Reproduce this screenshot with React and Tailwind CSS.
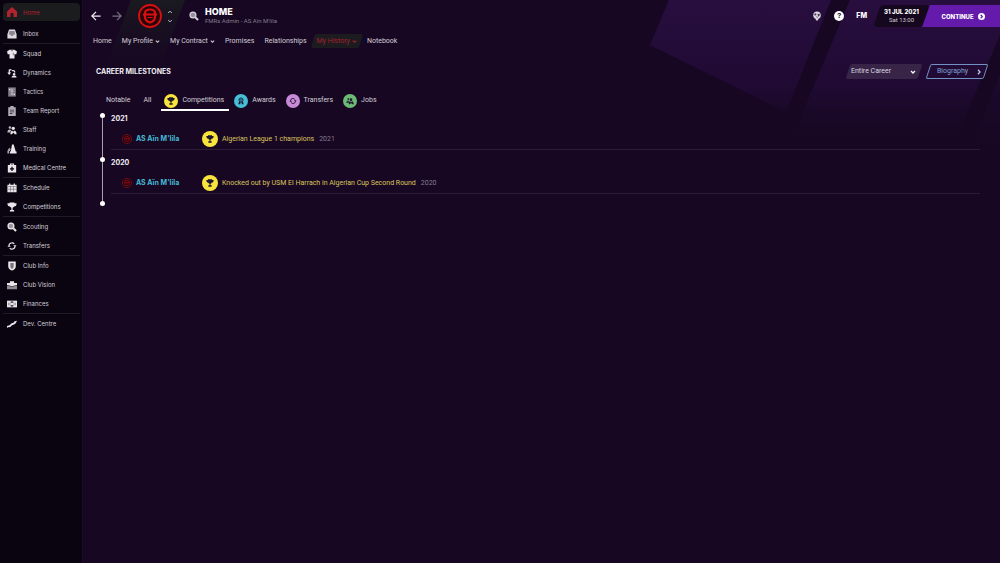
import React, { useState } from 'react';
import clsx from 'clsx';

const Icon = ({ children, className = 'w-3 h-3', box = '0 0 24 24' }) => (
    <svg viewBox={box} className={clsx('shrink-0', className)} fill="currentColor" aria-hidden="true">
        {children}
    </svg>
);

const Chevron = ({ className, d = 'M4 8l8 8 8-8' }) => (
    <svg viewBox="0 0 24 24" className={clsx('shrink-0', className)} fill="none" stroke="currentColor" strokeWidth="5" aria-hidden="true">
        <path d={d} />
    </svg>
);

// Shapes shared between the side menu, the tabs and the timeline
const trophy = <path d="M6 1h12v2h5c0 5-2 8-6 8-1 1.500-2 2.500-3.500 3v5H17v4H7v-4h3.500v-5C9 13.500 8 12.500 7 11 3 11 1 8 1 3h5z" />;
const magnifier = (
    <>
        <circle cx="9.500" cy="9.500" r="7" fillOpacity=".65" stroke="currentColor" strokeWidth="3" />
        <path d="M13.500 17l3.500-3.500 6.500 6.500-3.500 3.500z" />
    </>
);
const cycle = (
    <g fill="none" stroke="currentColor" strokeWidth="3">
        <path d="M4.500 11a7.500 7.500 0 0 1 13-4M19.500 13a7.500 7.500 0 0 1-13 4" />
        <path d="M15 10h8l-4 4.500zM1 14h8l-4-4.500z" fill="currentColor" stroke="none" />
    </g>
);
const people = (
    <>
        <circle cx="7" cy="6" r="3" fillOpacity=".8" />
        <path d="M1 18c0-5 2-7.500 6-7.500l3 2-3 5.500z" fillOpacity=".8" />
        <circle cx="15" cy="8" r="4" />
        <path d="M8 22c0-5 2-8 4-9l3 3 3-3c3 1 5 4 5 9h-4l-4-4-3 4z" />
    </>
);
const rosette = (
    <>
        <circle cx="12" cy="9" r="6" fill="none" stroke="currentColor" strokeWidth="3" />
        <circle cx="12" cy="9" r="2.500" />
        <path d="M6 14l5 2-2 7-2-2-3 1zM18 14l-5 2 2 7 2-2 3 1z" />
    </>
);

const menu = [
    [
        { name: 'Inbox', icon: <><path d="M5 1h14l4 11v11H1V12z" fillOpacity=".95" /><path d="M6 5h12l2 8h-4l-2 4h-4l-2-4H4z" fill="#8b8691" /></> },
    ],
    [
        { name: 'Squad', icon: <><path d="M6 2h12l6 4-2 7-4-1v11H6V12l-4 1-2-7z" /><path d="M9 2h6l-3 4zM14 9h2v6h-2z" fill="#6f6a76" /></> },
        { name: 'Dynamics', icon: <><path d="M5 3h6v3H7v5h3l-5 6-4-6h3V5zM12 5h3c3 0 5 2 5 6h-3c0-2-1-3-2-3h-3z" /><circle cx="17" cy="15" r="3" /><path d="M11 23c0-3 2-5 6-5s6 2 6 5z" /></> },
        { name: 'Tactics', icon: <><path d="M3 1h18v22H3z" fillOpacity=".55" /><path d="M11 4h2v4h-2zM9 9h6v2H9zM11 13h2v6h-2zM5 5h3v3H5zM16 16h3v3h-3z" /></> },
        { name: 'Team Report', icon: <><path d="M3 3h5V0h8v3h5v21H3z" fillOpacity=".75" /><path d="M7 9h10v2H7zM7 13h10v2H7zM7 17h6v2H7z" fill="#3b3544" /></> },
        { name: 'Staff', icon: people },
        { name: 'Training', icon: <><path d="M12 1h4l5 17h2v5H7v-5h2z" /><path d="M5 9l4 3-2 5H5v6H1v-6z" fillOpacity=".7" /></> },
        { name: 'Medical Centre', icon: <><path d="M7 5V1h10v4h5v18H2V5zm3 0h4V3.500h-4z" fillRule="evenodd" /><path d="M10.500 9h3v3.500H17v3h-3.500V19h-3v-3.500H7v-3h3.500z" fill="#0a0410" /></> },
    ],
    [
        { name: 'Schedule', icon: <><path d="M1 4h4V1h3v3h8V1h3v3h4v18H1z" /><path d="M2 8.500h20M2 15h20M8.500 8v13M15.500 8v13" stroke="#5a5463" strokeWidth="1.200" /></> },
        { name: 'Competitions', icon: trophy },
    ],
    [
        { name: 'Scouting', icon: magnifier },
        { name: 'Transfers', icon: cycle },
    ],
    [
        { name: 'Club Info', icon: <><path d="M3 1h18v12c0 5-4 8-9 10-5-2-9-5-9-10z" /><path d="M8 5h8v9c0 2-2 4-4 5-2-1-4-3-4-5z" fill="#77727e" /></> },
        { name: 'Club Vision', icon: <><path d="M0 7h7V3h10v4h7v5l-12 3-12-3z" /><path d="M0 13l12 3 12-3v9H0z" fillOpacity=".6" /></> },
        { name: 'Finances', icon: <><path d="M0 4h24v16H0z" /><path d="M9 6h6v12H9z" fill="#0a0410" /><circle cx="12" cy="12" r="3.500" /><path d="M3 9h3v6H3zM18 9h3v6h-3z" fill="#8a8590" /></> },
    ],
    [
        { name: 'Dev. Centre', icon: <path d="M0 17l6-2 5-5 5-1 1-3 7-2-3 6-4 3-5 2-4 4-6 1-2 2z" /> },
    ],
];

const sections = [
    { name: 'Home' },
    { name: 'My Profile', more: true },
    { name: 'My Contract', more: true },
    { name: 'Promises' },
    { name: 'Relationships' },
    { name: 'My History', more: true },
    { name: 'Notebook' },
];

const tabs = [
    { name: 'Notable' },
    { name: 'All' },
    { name: 'Competitions', icon: trophy, color: 'bg-[#f8e43c]' },
    { name: 'Awards', icon: rosette, color: 'bg-[#45bfd6]' },
    { name: 'Transfers', icon: cycle, color: 'bg-[#c88ad6]' },
    { name: 'Jobs', icon: people, color: 'bg-[#6dba74]' },
];

const milestones = [
    { year: '2021', club: 'AS Aïn M\'lila', text: 'Algerian League 1 champions' },
    { year: '2020', club: 'AS Aïn M\'lila', text: 'Knocked out by USM El Harrach in Algerian Cup Second Round' },
];

const Crest = ({ className }) => (
    <svg viewBox="0 0 24 24" className={clsx('shrink-0', className)} fill="none" stroke="#d90f12" aria-hidden="true">
        <circle cx="12" cy="12" r="11" fill="#2a0508" strokeWidth="1.800" />
        <path d="M7 8.500C7.500 6.500 9.500 5.500 12 5.500s4.500 1 5 3V13c0 3-2 4.500-5 5.500-3-1-5-2.500-5-5.500z" strokeWidth="2.200" />
        <path d="M5 10.500h14" strokeWidth="2" />
        <path d="M9.500 13.500h5" strokeWidth="1" />
    </svg>
);

const Sidebar = () => (
    <nav className="w-[83px] shrink-0 bg-[#0a0411] pl-[3px] pr-[2px] pt-[3px] font-['Inter',sans-serif] text-[6px] text-[#d3cfd7] border-r border-[#1c0c29]">
        <a href="#home" className="flex h-[18px] mb-[3px] items-center gap-[5px] rounded-sm bg-[#1b1c1e] pl-[3px] text-[#b3222f]">
            <Icon><path d="M12 2l10 9v11h-7v-8H9v8H2V11z" /></Icon>
            Home
        </a>
        {menu.map((group, i) => (
            <ul key={group[0].name} className={clsx(i > 0 && 'border-t border-[#211a28]')}>
                {group.map((item) => (
                    <li key={item.name}>
                        <a href={'#' + item.name} className="flex h-[19px] items-center gap-[6px] pl-1">
                            <Icon className="w-[10px] h-[10px] text-[#e9e6ec]">{item.icon}</Icon>
                            {item.name}
                        </a>
                    </li>
                ))}
            </ul>
        ))}
    </nav>
);

const Backdrop = () => (
    <svg viewBox="0 0 917 240" preserveAspectRatio="xMaxYMin slice" className="absolute inset-x-0 top-0 -z-10 h-[240px] w-full" aria-hidden="true">
        <defs>
            <linearGradient id="purple" x1="0" y1="0" x2="0" y2="150" gradientUnits="userSpaceOnUse">
                <stop offset="0" stopColor="#280e3f" />
                <stop offset="0.600" stopColor="#1f0a32" />
                <stop offset="1" stopColor="#170722" stopOpacity="0" />
            </linearGradient>
            <linearGradient id="edge" x1="0" y1="50" x2="0" y2="170" gradientUnits="userSpaceOnUse">
                <stop offset="0" stopColor="#210b36" />
                <stop offset="1" stopColor="#170722" stopOpacity="0" />
            </linearGradient>
            <linearGradient id="green" x1="0" y1="0" x2="0" y2="80" gradientUnits="userSpaceOnUse">
                <stop offset="0" stopColor="#1a1a20" />
                <stop offset="1" stopColor="#170a20" stopOpacity="0" />
            </linearGradient>
        </defs>
        <path d="M586 0L567 45 703 112 748 0z" fill="url(#purple)" />
        <path d="M767 0h150v35L868 150H704z" fill="url(#purple)" />
        <path d="M917 75v95h-38z" fill="url(#edge)" />
        <path d="M48 0h54L72 80H18z" fill="url(#green)" />
    </svg>
);

const Header = () => (
    <header className="flex h-8 items-center">
        <button type="button" aria-label="Back" className="ml-2 text-[#f0edf3]">
            <svg viewBox="0 0 24 24" className="w-[10px] h-[10px]" fill="none" stroke="currentColor" strokeWidth="3"><path d="M23 12H3M12 2L2 12l10 10" /></svg>
        </button>
        <button type="button" aria-label="Forward" className="ml-[11px] text-[#77707f]">
            <svg viewBox="0 0 24 24" className="w-[10px] h-[10px]" fill="none" stroke="currentColor" strokeWidth="3"><path d="M1 12h20M12 2l10 10-10 10" /></svg>
        </button>
        <Crest className="ml-4 w-6 h-6" />
        <button type="button" aria-label="Switch club" className="ml-[5px] flex flex-col gap-[5px] text-[#e6e2ea]">
            <Chevron className="w-[6px] h-[4px]" d="M1 18L12 7l11 11" />
            <Chevron className="w-[6px] h-[4px]" d="M1 6l11 11L23 6" />
        </button>
        <button type="button" aria-label="Search" className="ml-4 text-[#d9d4de]">
            <Icon className="w-[10px] h-[10px]">{magnifier}</Icon>
        </button>
        <div className="ml-[6px]">
            <h1 className="font-['Inter',sans-serif] text-[9px] leading-[10px] font-extrabold text-white">HOME</h1>
            <p className="text-[6px] leading-[8px] text-[#857c8d]">FMRs Admin - AS Aïn M'lila</p>
        </div>
        <div className="ml-auto flex h-[22px] items-center">
            <button type="button" aria-label="World" className="text-[#dcd8e0]">
                <Icon className="w-[10px] h-[10px]">
                    <circle cx="12" cy="10" r="9" />
                    <path d="M8 18h8l-2 5h-4z" />
                    <path d="M7 5l4 2-2 4-4-1zM13 8l5-2 1 4-4 4zM9 14l4-1 1 4z" fill="#4d3a5e" />
                </Icon>
            </button>
            <button type="button" aria-label="Help" className="ml-3 flex w-[10px] h-[10px] items-center justify-center rounded-full bg-white text-[8px] leading-[10px] font-bold text-[#1b0a2a]">?</button>
            <button type="button" className="ml-3 font-['Inter',sans-serif] text-[7px] font-extrabold text-white">FM</button>
            <div className="relative isolate ml-[10px] -mr-1 flex h-full w-[49px] flex-col justify-center text-center before:absolute before:inset-0 before:-z-10 before:-skew-x-[18deg] before:rounded-sm before:bg-[#14071e]">
                <span className="font-['Inter',sans-serif] text-[6px] leading-[8px] font-extrabold text-white">31 JUL 2021</span>
                <span className="text-[6px] leading-[8px] text-[#cfcad4]">Sat 13:00</span>
            </div>
            <button type="button" className="relative flex h-full w-[78px] items-center justify-center gap-1 bg-[#641bab] pl-1 font-['Inter',sans-serif] text-[6px] font-extrabold text-white [clip-path:polygon(8px_0,100%_0,100%_100%,0_100%)]">
                CONTINUE
                <Icon className="w-[7px] h-[7px]">
                    <circle cx="12" cy="12" r="12" />
                    <path d="M9 6l6 6-6 6" fill="none" stroke="#641bab" strokeWidth="4" />
                </Icon>
            </button>
        </div>
    </header>
);

const App = () => {
    const [tab, setTab] = useState('Competitions');
    const [period, setPeriod] = useState('Entire Career');

    return (
        <div className="flex min-h-screen bg-[#170722] font-['Roboto',sans-serif] text-[7px] text-[#d3ced8]">
            <Sidebar />
            <main className="relative isolate min-w-0 flex-1">
                <Backdrop />
                <Header />

                <nav className="flex h-[18px] items-center gap-[10px] pl-[10px]">
                    {sections.map((s) => (
                        <a
                            key={s.name}
                            href={'#' + s.name}
                            className={clsx(
                                'flex items-center gap-[2px]',
                                s.name === 'My History' && 'relative isolate -mx-1 h-[14px] px-1 text-[#a3202c] before:absolute before:inset-0 before:-z-10 before:-skew-x-[18deg] before:rounded-xs before:bg-[#1c1c20]'
                            )}
                        >
                            {s.name}
                            {s.more && <Chevron className="w-[5px] h-[5px]" />}
                        </a>
                    ))}
                </nav>

                <div className="mt-[14px] flex h-[15px] items-center pl-[13px] pr-[14px]">
                    <h2 className="pt-[2px] font-['Inter',sans-serif] text-[7px] font-bold text-[#f1eef4]">CAREER MILESTONES</h2>
                    <div className="relative isolate ml-auto h-full w-[72px] before:absolute before:inset-0 before:-z-10 before:-skew-x-[18deg] before:rounded-xs before:bg-[#382447]">
                        <select
                            aria-label="Period"
                            value={period}
                            onChange={(e) => setPeriod(e.target.value)}
                            className="h-full w-full appearance-none bg-transparent pl-[3px] text-[7px] text-[#dcd7e1] focus:outline-none"
                        >
                            <option>Entire Career</option>
                            <option>This Season</option>
                        </select>
                        <Chevron className="pointer-events-none absolute right-1 top-[5px] w-[6px] h-[6px] text-white" />
                    </div>
                    <button type="button" className="relative isolate ml-[8px] flex h-full w-[58px] items-center justify-between pl-[9px] pr-1 text-[#7ea2d0] before:absolute before:inset-0 before:-z-10 before:-skew-x-[18deg] before:rounded-xs before:border before:border-[#7391c4]">
                        Biography
                        <Chevron className="w-[6px] h-[6px] text-[#b8cdea]" d="M8 3l8 9-8 9" />
                    </button>
                </div>

                <div role="tablist" className="mt-[13px] flex h-[19px] gap-[2px] pl-5">
                    {tabs.map((t) => (
                        <button
                            key={t.name}
                            type="button"
                            role="tab"
                            aria-selected={tab === t.name}
                            onClick={() => setTab(t.name)}
                            className={clsx(
                                'flex items-center gap-1 border-b-2 pl-[3px]',
                                t.icon ? 'pr-[5px]' : 'pr-2',
                                tab === t.name ? 'border-white' : 'border-transparent'
                            )}
                        >
                            {t.icon && (
                                <span className={clsx('flex w-[14px] h-[14px] items-center justify-center rounded-full text-[#1d1630]', t.color)}>
                                    <Icon className="w-2 h-2">{t.icon}</Icon>
                                </span>
                            )}
                            {t.name}
                        </button>
                    ))}
                </div>

                <div className="mt-[2px] ml-[17px] mr-5">
                    <ol>
                        {milestones.map((m) => (
                            <li key={m.year} className="relative h-[44px] pl-[11px] before:absolute before:left-[2px] before:top-0 before:h-full before:w-px before:bg-[#a8a2ae] after:absolute after:left-0 after:top-0 after:w-[5px] after:h-[5px] after:rounded-full after:bg-white">
                                <h3 className="font-['Inter',sans-serif] text-[7px] leading-[11px] font-bold text-[#f1eef4]">{m.year}</h3>
                                <div className="mt-[5px] flex h-[21px] items-center border-b border-[#2b1b36] pl-[11px]">
                                    <div className="flex w-[80px] items-center gap-[4px]">
                                        <Crest className="w-[10px] h-[10px] opacity-60" />
                                        <a href="#club" className="font-['Inter',sans-serif] font-bold text-[#46b9d3]">{m.club}</a>
                                    </div>
                                    <span className="flex w-4 h-4 items-center justify-center rounded-full bg-[#f8e43c] text-[#1d1630]">
                                        <Icon className="w-2 h-2">{trophy}</Icon>
                                    </span>
                                    <span className="ml-[4px] text-[#dcc55f]">{m.text}</span>
                                    <span className="ml-[5px] text-[#857b90]">{m.year}</span>
                                </div>
                            </li>
                        ))}
                    </ol>
                    <div className="w-[5px] h-[5px] rounded-full bg-white" />
                </div>
            </main>
        </div>
    );
};

export default App;
